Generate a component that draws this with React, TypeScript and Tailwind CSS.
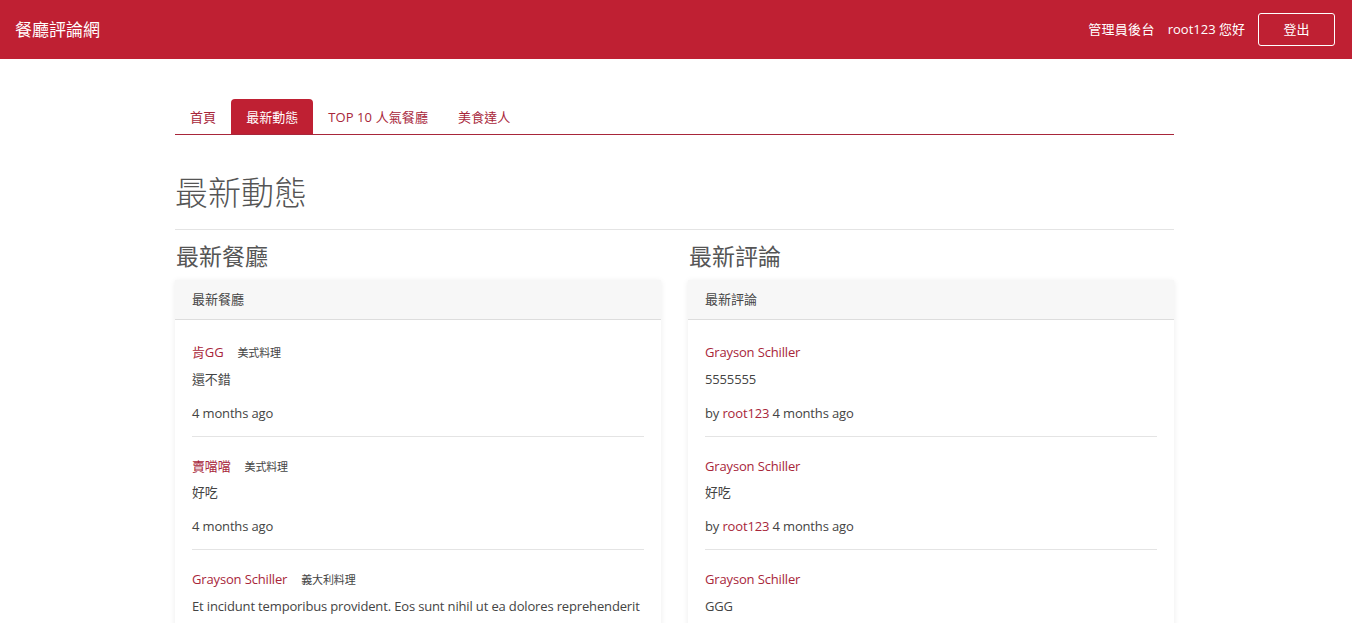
import React from "react";

const font = { fontFamily: '"Open Sans", "Noto Sans CJK TC", sans-serif' };

const restaurants = [
  { name: "肯GG", cat: "美式料理", text: "還不錯", time: "4 months ago" },
  { name: "賣噹噹", cat: "美式料理", text: "好吃", time: "4 months ago" },
  {
    name: "Grayson Schiller",
    cat: "義大利料理",
    text: "Et incidunt temporibus provident. Eos sunt nihil ut ea dolores reprehenderit quae ipsa.",
    time: "4 months ago",
  },
];

const comments = [
  { name: "Grayson Schiller", text: "5555555", user: "root123", time: "4 months ago" },
  { name: "Grayson Schiller", text: "好吃", user: "root123", time: "4 months ago" },
  { name: "Grayson Schiller", text: "GGG", user: "root123", time: "4 months ago" },
];

function Header() {
  return (
    <header className="h-[59px] bg-[#bf2033] flex items-center justify-between pl-[15px] pr-[17px] text-white">
      <a className="text-[17px]">餐廳評論網</a>
      <div className="flex items-center text-[13px]">
        <a className="tracking-[0.3px]">管理員後台</a>
        <span className="ml-[13px]">root123 您好</span>
        <button className="ml-[13px] w-[77px] h-[33px] border border-white rounded-[3px] text-[13px]">登出</button>
      </div>
    </header>
  );
}

function Tabs() {
  const tabs = ["首頁", "最新動態", "TOP 10 人氣餐廳", "美食達人"];
  return (
    <ul className="flex border-b border-[#a8263a] h-[36px] items-end">
      {tabs.map((t, i) => (
        <li
          key={t}
          className={
            i === 1
              ? "h-[35px] px-[15px] pt-[2px] flex items-center bg-[#bf2033] text-white rounded-t-[4px] text-[13px]"
              : "h-[35px] px-[15px] pt-[2px] flex items-center text-[#a8263a] text-[13px] tracking-[0.1px]"
          }
        >
          {t}
        </li>
      ))}
    </ul>
  );
}

function Card({ title, children }: { title: string; children: React.ReactNode }) {
  return (
    <div className="mt-[8px] shadow-[0_1px_6px_rgba(0,0,0,0.08)]">
      <div className="h-[40px] bg-[#f7f7f7] border-b border-[#ddd] flex items-center px-[17px] text-[13px] text-[#444]">{title}</div>
      <div className="px-[17px] pt-[19px] tracking-[-0.15px]">{children}</div>
    </div>
  );
}

const itemCls = (last: boolean) =>
  last ? "pt-[4px]" : "border-b border-[#e4e4e4] pt-[4px] pb-[12px] mb-[16px]";

export default function App() {
  return (
    <div className="min-h-[700px] bg-white text-[#444]" style={font}>
      <Header />
      <div className="w-[999px] ml-[175px] pt-[40px]">
        <Tabs />
        <h1 className="mt-[38px] text-[33px] text-[#555] leading-[40px] font-light">最新動態</h1>
        <hr className="mt-[16px] border-[#e4e4e4]" />
        <div className="flex gap-[27px] mt-[10px]">
          <div className="flex-1">
            <h3 className="text-[23px] text-[#555] leading-[32px] pl-[1px]">最新餐廳</h3>
            <Card title="最新餐廳">
              {restaurants.map((r, i) => (
                <div key={i} className={itemCls(i === restaurants.length - 1)}>
                  <div className="flex items-baseline">
                    <a className="text-[13px] text-[#a8263a]">{r.name}</a>
                    <span className="ml-[14px] text-[11px] text-[#444]">{r.cat}</span>
                  </div>
                  <p className="mt-[5px] text-[13px] leading-[22px]">{r.text}</p>
                  <p className="mt-[12px] text-[13px] leading-[22px]">{r.time}</p>
                </div>
              ))}
            </Card>
          </div>
          <div className="flex-1">
            <h3 className="text-[23px] text-[#555] leading-[32px] pl-[1px]">最新評論</h3>
            <Card title="最新評論">
              {comments.map((c, i) => (
                <div key={i} className={itemCls(i === comments.length - 1)}>
                  <div className="flex items-baseline">
                    <a className="text-[13px] text-[#a8263a]">{c.name}</a>
                  </div>
                  <p className="mt-[5px] text-[13px] leading-[22px]">{c.text}</p>
                  <p className="mt-[12px] text-[13px] leading-[22px]">
                    by <a className="text-[#a8263a]">{c.user}</a> {c.time}
                  </p>
                </div>
              ))}
            </Card>
          </div>
        </div>
      </div>
    </div>
  );
}
